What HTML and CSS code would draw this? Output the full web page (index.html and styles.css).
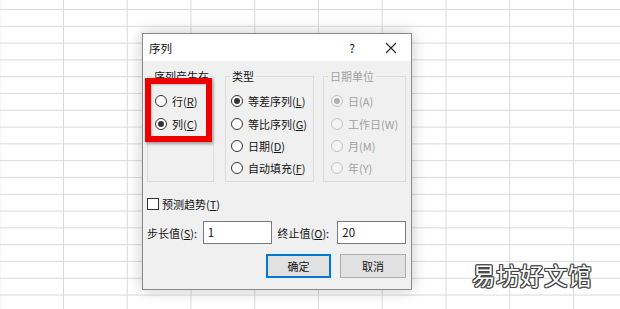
FILE: index.html
```html
<!DOCTYPE html>
<html lang="zh">
<head>
<meta charset="utf-8">
<link rel="stylesheet" href="styles.css">
</head>
<body>
<div class="sheet"></div>
<div class="dialog">
  <div class="titlebar">
    <span class="title">序列</span>
    <span class="help">?</span>
    <span class="close"><svg width="12" height="12" viewBox="0 0 12 12"><path d="M1 1L11 11M11 1L1 11" stroke="#222" stroke-width="1.1" fill="none"/></svg></span>
  </div>
  <div class="content">
    <div class="groups">
      <div class="group g1">
        <div class="legend">序列产生在</div>
        <div class="opt"><span class="radio"></span>行(<u>R</u>)</div>
        <div class="opt"><span class="radio on"></span>列(<u>C</u>)</div>
      </div>
      <div class="group g2">
        <div class="legend">类型</div>
        <div class="opt"><span class="radio on"></span>等差序列(<u>L</u>)</div>
        <div class="opt"><span class="radio"></span>等比序列(<u>G</u>)</div>
        <div class="opt"><span class="radio"></span>日期(<u>D</u>)</div>
        <div class="opt"><span class="radio"></span>自动填充(<u>F</u>)</div>
      </div>
      <div class="group g3 disabled">
        <div class="legend">日期单位</div>
        <div class="opt"><span class="radio on"></span>日(A)</div>
        <div class="opt"><span class="radio"></span>工作日(W)</div>
        <div class="opt"><span class="radio"></span>月(M)</div>
        <div class="opt"><span class="radio"></span>年(Y)</div>
      </div>
    </div>
    <div class="check"><span class="box"></span>预测趋势(<u>T</u>)</div>
    <div class="fields">
      <span class="lbl">步长值(<u>S</u>):</span>
      <span class="input">1</span>
      <span class="lbl lbl2">终止值(<u>O</u>):</span>
      <span class="input">20</span>
    </div>
    <div class="buttons">
      <span class="btn primary">确定</span>
      <span class="btn">取消</span>
    </div>
  </div>
  <div class="highlight"></div>
</div>
<div class="watermark">易坊好文馆</div>
</body>
</html>
```

FILE: styles.css
```css
html, body {
  margin: 0;
  padding: 0;
  width: 620px;
  height: 309px;
  overflow: hidden;
  background: #fff;
  font-family: "Noto Sans CJK SC", "Noto Sans", sans-serif;
}
.sheet {
  position: absolute;
  left: 0; top: 0;
  width: 620px; height: 309px;
  background-image:
    linear-gradient(to right, #dadada 0 1px, transparent 1px),
    linear-gradient(to bottom, #dadada 0 1px, transparent 1px);
  background-size: 63.75px 100%, 100% 16.8px;
  background-position: 63px 0, 0 9px;
  background-repeat: repeat-x, repeat-y;
}
.dialog {
  position: absolute;
  left: 142px;
  top: 33px;
  width: 270px;
  height: 257px;
  box-sizing: border-box;
  border: 1px solid #8a8a8a;
  background: #f0f0f0;
  box-shadow: 0 0 14px rgba(0,0,0,0.22);
  font-size: 11px;
  color: #141414;
  display: flex;
  flex-direction: column;
}
.titlebar {
  height: 27px;
  background: #fff;
  display: flex;
  align-items: center;
  padding-left: 6px;
}
.title { font-size: 11.5px; flex: 1; }
.help { width: 14px; text-align: center; margin-right: 26px; font-size: 12px; }
.close { width: 12px; height: 12px; margin-right: 14px; display: flex; }
.content {
  padding: 15px 5px 0 4px;
  display: flex;
  flex-direction: column;
}
.groups {
  display: flex;
  height: 106px;
}
.group {
  box-sizing: border-box;
  border: 1px solid #dcdcdc;
  height: 106px;
  display: flex;
  flex-direction: column;
  gap: 8.3px;
  padding-top: 20px;
}
.g1 { width: 67px; padding-left: 7px; }
.g2 { width: 89px; margin-left: 11px; padding-left: 5px; }
.g3 { width: 83px; margin-left: 9px; padding-left: 7px; }
.legend {
  position: relative;
  margin-top: -28px;
  margin-bottom: 3px;
  margin-left: -3px;
  padding: 0 2px;
  align-self: flex-start;
  background: #f0f0f0;
  height: 14px;
  line-height: 14px;
}
.g2 .legend { margin-left: -1px; }
.opt {
  display: flex;
  align-items: center;
  height: 14px;
  white-space: nowrap;
}
.radio {
  width: 12px; height: 12px;
  box-sizing: border-box;
  border: 1px solid #333;
  border-radius: 50%;
  background: #fff;
  margin-right: 5px;
  display: flex;
  align-items: center;
  justify-content: center;
  flex: none;
}
.radio.on::after {
  content: "";
  width: 6px; height: 6px;
  border-radius: 50%;
  background: #333;
}
.disabled { color: #a0a0a0; }
.disabled .radio { border-color: #c2c2c2; background: #f4f4f4; }
.disabled .radio.on::after { background: #b0b0b0; }
u { text-decoration-thickness: 1px; text-underline-offset: 1px; }
.check {
  display: flex;
  align-items: center;
  margin-top: 15px;
  height: 14px;
}
.box {
  width: 12px; height: 12px;
  box-sizing: border-box;
  border: 1px solid #333;
  background: #fff;
  margin-right: 3px;
}
.fields {
  display: flex;
  align-items: center;
  margin-top: 10px;
  height: 23px;
}
.lbl { width: 56px; }
.lbl2 { width: 60px; margin-left: 6px; }
.input {
  box-sizing: border-box;
  width: 69px; height: 23px;
  border: 1px solid #7a7a7a;
  background: #fff;
  padding-left: 4px;
  line-height: 20px;
  font-size: 11.5px;
}
.buttons {
  display: flex;
  justify-content: flex-end;
  gap: 9px;
  margin-top: 10px;
}
.btn {
  box-sizing: border-box;
  width: 66px; height: 24px;
  border: 1px solid #adadad;
  background: #e1e1e1;
  display: flex;
  align-items: center;
  justify-content: center;
}
.btn.primary {
  border: 2px solid #0078d7;
  width: 65px;
}
.highlight {
  position: absolute;
  left: 2px;
  top: 44px;
  width: 67px;
  height: 64px;
  box-sizing: border-box;
  border: 6px solid #ee0000;
  box-shadow: 1px 2px 3px rgba(0,0,0,0.35), inset 1px 1px 2px rgba(0,0,0,0.2);
}
.watermark {
  position: absolute;
  left: 472px;
  top: 260px;
  font-size: 23.5px;
  line-height: 30px;
  color: #fff;
  letter-spacing: 0.5px;
  text-shadow:
    -1px -1px 0 #444, 1px -1px 0 #444, -1px 1px 0 #444, 1px 1px 0 #444,
    0 -1px 0 #444, 0 1px 0 #444, -1px 0 0 #444, 1px 0 0 #444,
    0 0 2px #666;
}
```
